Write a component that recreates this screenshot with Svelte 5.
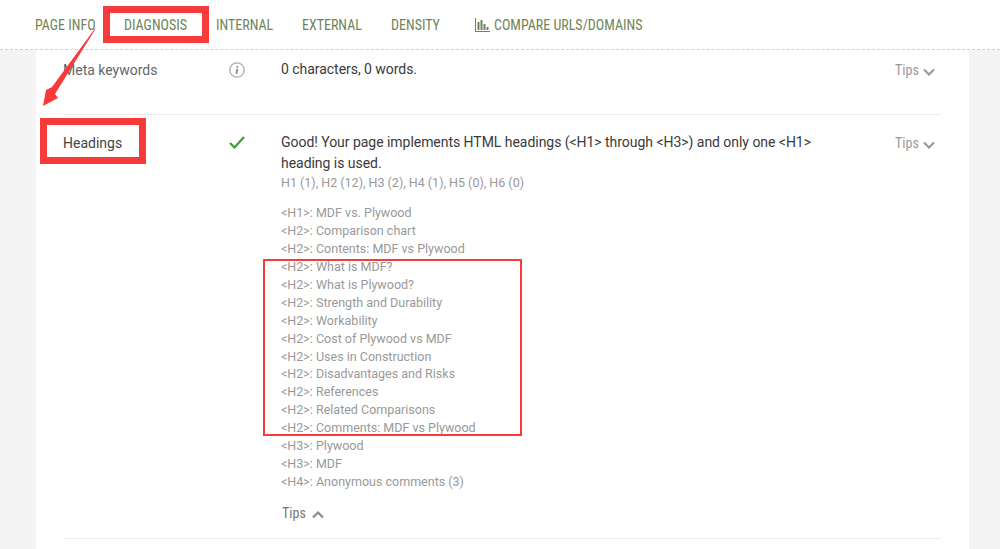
<script>
  const navItems = [
    { label: "PAGE INFO", width: 89 },
    { label: "DIAGNOSIS", width: 92 },
    { label: "INTERNAL", width: 86 },
    { label: "EXTERNAL", width: 89 },
    { label: "DENSITY", width: 84 }
  ];

  const headings = [
    "<H1>: MDF vs. Plywood",
    "<H2>: Comparison chart",
    "<H2>: Contents: MDF vs Plywood",
    "<H2>: What is MDF?",
    "<H2>: What is Plywood?",
    "<H2>: Strength and Durability",
    "<H2>: Workability",
    "<H2>: Cost of Plywood vs MDF",
    "<H2>: Uses in Construction",
    "<H2>: Disadvantages and Risks",
    "<H2>: References",
    "<H2>: Related Comparisons",
    "<H2>: Comments: MDF vs Plywood",
    "<H3>: Plywood",
    "<H3>: MDF",
    "<H4>: Anonymous comments (3)"
  ];
</script>

<div class="page">
  <nav class="tabs">
    {#each navItems as item}
      <a class="tab" style="width: {item.width}px">{item.label}</a>
    {/each}
    <a class="tab compare">
      <svg width="15" height="14" viewBox="0 0 15 14">
        <path d="M0.5 0v13.500H15" fill="none" stroke="#6f8456" />
        <rect x="2.500" y="4" width="2" height="8" fill="#6f8456" />
        <rect x="5.500" y="2" width="2" height="10" fill="#6f8456" />
        <rect x="8.500" y="6" width="2" height="6" fill="#6f8456" />
        <rect x="11.500" y="9" width="2" height="3" fill="#6f8456" />
      </svg>
      COMPARE URLS/DOMAINS
    </a>
  </nav>

  <div class="card">
    <section class="row first">
      <div class="label">Meta keywords</div>
      <div class="status">
        <svg width="16" height="16" viewBox="0 0 16 16">
          <circle cx="8" cy="8" r="7.2" fill="none" stroke="#aaa" stroke-width="1.300" />
          <circle cx="8.400" cy="4.700" r="1" fill="#888" />
          <path d="M8.200 6.900 7.500 11.800" stroke="#888" stroke-width="1.800" fill="none" />
        </svg>
      </div>
      <div class="body">
        <p class="main">0 characters, 0 words.</p>
      </div>
      <div class="tips">Tips
        <svg width="12" height="8" viewBox="0 0 12 8"><path d="M1 1.500l5 5 5-5" fill="none" stroke="#9a9a9a" stroke-width="2.200" /></svg>
      </div>
    </section>

    <section class="row second">
      <div class="label dark">Headings</div>
      <div class="status">
        <svg width="16" height="13" viewBox="0 0 16 13">
          <path d="M1 7l4.500 4.500L15 1" fill="none" stroke="#3f9b35" stroke-width="2.200" />
        </svg>
      </div>
      <div class="body">
        <p class="main">Good! Your page implements HTML headings (&lt;H1&gt; through &lt;H3&gt;) and only one &lt;H1&gt; heading is used.</p>
        <p class="counts">H1 (1), H2 (12), H3 (2), H4 (1), H5 (0), H6 (0)</p>
        <ul class="list">
          {#each headings as line}
            <li>{line}</li>
          {/each}
        </ul>
        <div class="tips open">Tips
          <svg width="12" height="8" viewBox="0 0 12 8"><path d="M1 6.500l5-5 5 5" fill="none" stroke="#8a8a8a" stroke-width="2.200" /></svg>
        </div>
      </div>
      <div class="tips">Tips
        <svg width="12" height="8" viewBox="0 0 12 8"><path d="M1 1.500l5 5 5-5" fill="none" stroke="#9a9a9a" stroke-width="2.200" /></svg>
      </div>
    </section>
  </div>

  <!-- annotations drawn over the screenshot -->
  <div class="mark mark-tab"></div>
  <div class="mark mark-label"></div>
  <div class="mark mark-list"></div>
  <svg class="arrow" width="70" height="90" viewBox="0 0 70 90">
    <path d="M55 .5 12 59 6 62 3 78 18 70 15 66 55.500 1Z" fill="#f73a3a" />
  </svg>
</div>

<style>
  :global(body) {
    margin: 0;
    background: #f4f4f4;
  }

  .page {
    position: relative;
    display: flex;
    flex-direction: column;
    height: 549px;
    overflow: hidden;
    font-family: Roboto, "Liberation Sans", sans-serif;
  }

  .tabs {
    display: flex;
    align-items: center;
    flex: none;
    height: 50px;
    box-sizing: border-box;
    padding: 0 0 0 35px;
    background: #fff;
    border-bottom: 1px dashed #cfcfcf;
    font-size: 14px;
    font-stretch: 87%;
    color: #6f8456;
  }

  .tab {
    display: block;
    white-space: nowrap;
  }

  .compare {
    display: flex;
    align-items: center;
    gap: 4px;
  }

  .card {
    flex: 1;
    margin: 0 31px 0 36px;
    padding: 0 28px;
    background: #fff;
  }

  .row {
    display: grid;
    grid-template-columns: 153px 64px 614px 46px;
    border-bottom: 1px solid #ececec;
    color: #444;
    font-size: 14px;
  }

  .first {
    height: 55px;
    padding-top: 9px;
  }

  .second {
    height: 406px;
    padding-top: 17px;
  }

  .label {
    margin-left: -1px;
    line-height: 22px;
    color: #666;
  }

  .label.dark {
    color: #444;
  }

  .status {
    display: flex;
    justify-content: center;
    padding: 3px 24px 0 0;
    height: 16px;
  }

  .second .status {
    padding-top: 4px;
  }

  .main {
    margin: 0;
    width: 540px;
    line-height: 21px;
    letter-spacing: -0.04px;
    color: #3a3a3a;
  }

  .counts {
    margin: 0 0 12px;
    line-height: 18px;
    font-size: 12.5px;
    color: #999;
  }

  .list {
    margin: 0;
    padding: 0;
    list-style: none;
    font-size: 12.5px;
    line-height: 17.93px;
    color: #999;
  }

  .tips {
    line-height: 22px;
    font-size: 14px;
    font-stretch: 87%;
    color: #999;
    white-space: nowrap;
  }

  .tips svg {
    margin-left: 1px;
    vertical-align: -1px;
  }

  .tips.open {
    margin: 11px 0 0 1px;
    color: #777;
  }

  .tips.open svg {
    margin-left: 3px;
  }

  .mark {
    position: absolute;
    box-sizing: border-box;
    border: 7px solid #f73a3a;
  }

  .mark-tab {
    left: 103px;
    top: 6px;
    width: 106px;
    height: 37px;
  }

  .mark-label {
    left: 40px;
    top: 118px;
    width: 106px;
    height: 46px;
  }

  .mark-list {
    left: 263px;
    top: 259px;
    width: 259px;
    height: 177px;
    border-width: 2px;
  }

  .arrow {
    position: absolute;
    left: 40px;
    top: 28px;
  }
</style>
